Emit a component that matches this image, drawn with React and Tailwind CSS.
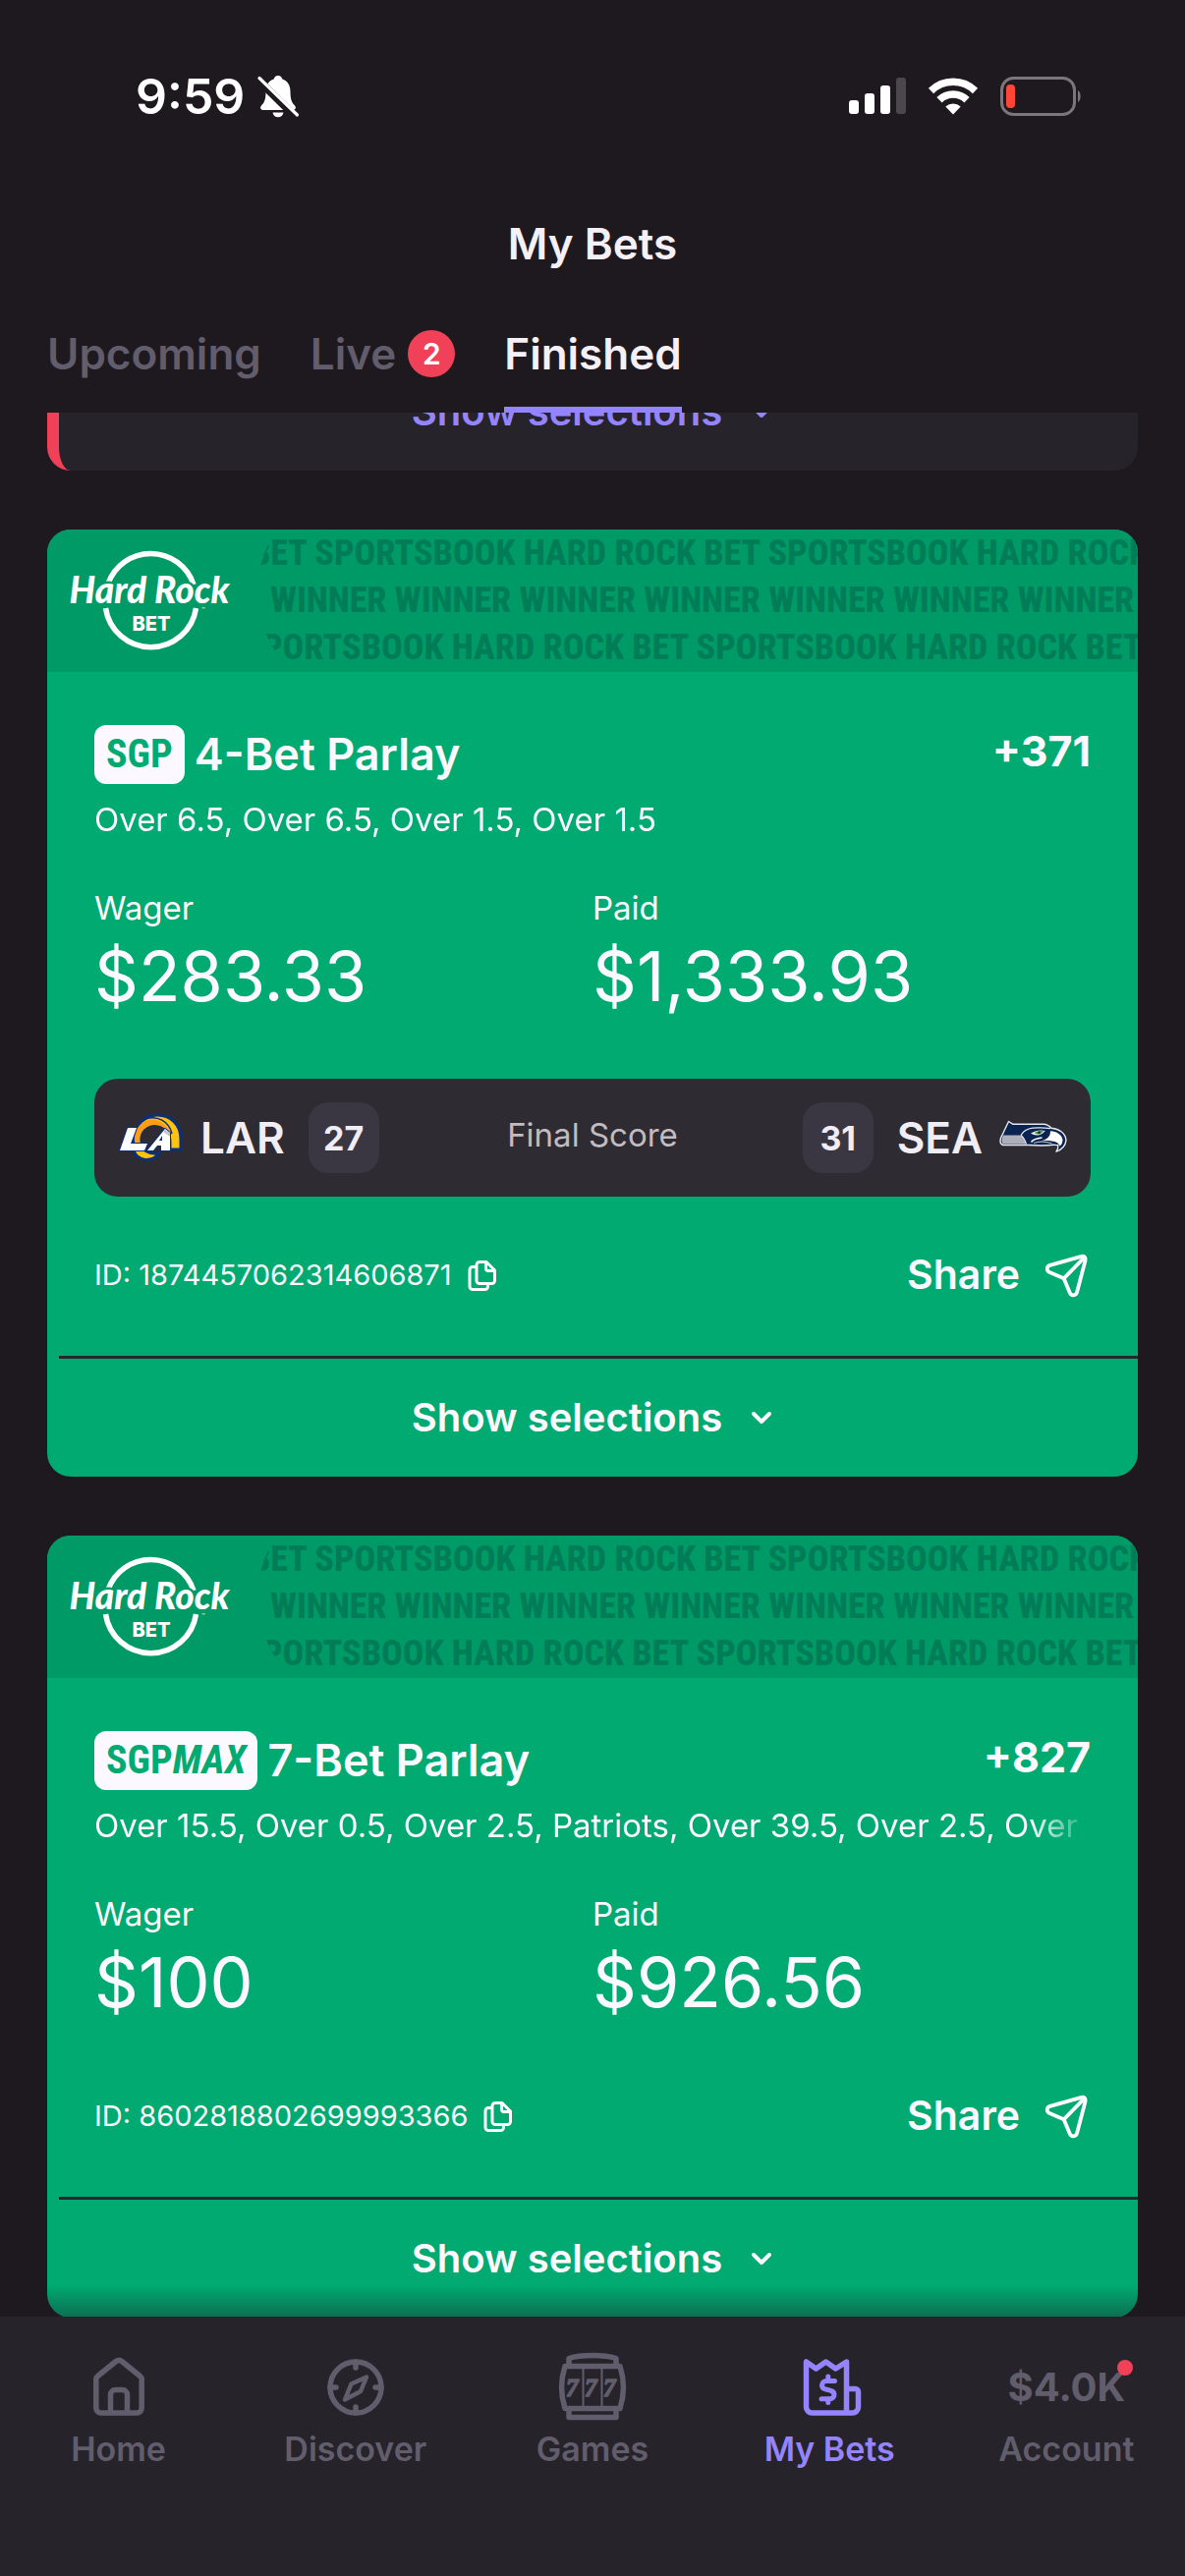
const BANNER_ROWS = [
  { shift: '-ml-[8px]', text: 'BET SPORTSBOOK HARD ROCK BET SPORTSBOOK HARD ROCK BET SPORTSBOOK HARD ROCK BET SPORTSBOOK' },
  { shift: 'ml-[12px]', text: 'WINNER WINNER WINNER WINNER WINNER WINNER WINNER WINNER WINNER WINNER WINNER' },
  { shift: 'ml-[4px]', text: 'PORTSBOOK HARD ROCK BET SPORTSBOOK HARD ROCK BET SPORTSBOOK HARD ROCK BET SPORTSBOOK' },
];

const BETS = [
  {
    tag: 'SGP',
    title: '4-Bet Parlay',
    odds: '+371',
    legs: 'Over 6.5, Over 6.5, Over 1.5, Over 1.5',
    wager: '$283.33',
    paid: '$1,333.93',
    score: true,
    id: '1874457062314606871',
  },
  {
    tag: 'SGP',
    tagSuffix: 'MAX',
    title: '7-Bet Parlay',
    odds: '+827',
    legs: 'Over 15.5, Over 0.5, Over 2.5, Patriots, Over 39.5, Over 2.5, Over 1.5',
    wager: '$100',
    paid: '$926.56',
    score: false,
    id: '8602818802699993366',
  },
];

function BellOff() {
  return (
    <svg className="h-11 w-11" viewBox="0 0 44 44" aria-label="Silent mode">
      <path
        fill="#fff"
        d="M22 1c2.500 0 4 1.500 4.300 3.600C31.500 6.300 34.500 11 34.500 17c0 8.500 1.500 11.500 4.500 14.500 1.800 1.900.8 4.500-2 4.500H7c-2.800 0-3.800-2.600-2-4.500 3-3 4.500-6 4.500-14.500 0-6 3-10.700 8.200-12.400C18 2.500 19.500 1 22 1zM16.500 38.500h11c-.5 3-2.600 4.800-5.500 4.800s-5-1.800-5.500-4.800z"
      />
      <path d="M2 5.500 40 43" stroke="#1e191f" strokeWidth="8" />
      <path d="M3 3.500 41.500 41" stroke="#fff" strokeWidth="3.200" strokeLinecap="round" />
    </svg>
  );
}

function Signal() {
  return (
    <svg className="h-[38px] w-[58px]" viewBox="0 0 58 38" fill="#fff" aria-label="Signal">
      <rect x="0" y="23" width="10" height="14" rx="3" />
      <rect x="16" y="16" width="10" height="21" rx="3" />
      <rect x="32" y="8" width="10" height="29" rx="3" />
      <rect x="48" y="0" width="10" height="37" rx="3" fill="#4b474c" />
    </svg>
  );
}

function Wifi() {
  return (
    <svg className="h-[38px] w-[52px]" viewBox="0 0 52 38" fill="none" stroke="#fff" strokeWidth="7.500" aria-label="Wi-Fi">
      <path d="M3.500 13.500a32 32 0 0 1 45 0" />
      <path d="M12 22.800a20 20 0 0 1 28 0" />
      <path d="M26 37.500 18.300 29.500a11.500 11.500 0 0 1 15.400 0z" fill="#fff" stroke="none" />
    </svg>
  );
}

function Battery() {
  return (
    <svg className="h-10 w-[84px]" viewBox="0 0 84 40" aria-label="Battery low">
      <rect x="1.500" y="1.500" width="74" height="37" rx="12" fill="none" stroke="#7a767b" strokeWidth="3" />
      <rect x="6" y="8" width="9" height="24" rx="4" fill="#ff4438" />
      <path d="M79 14c3.500 1.500 3.500 10.500 0 12z" fill="#7a767b" />
    </svg>
  );
}

function HardRockLogo() {
  return (
    <svg className="h-[104px] w-[172px] shrink-0" viewBox="0 0 172 104" role="img" aria-label="Hard Rock Bet">
      <g fill="none" stroke="#fff" strokeWidth="5.500">
        <path d="M42 34A46 46 0 0 1 129 35" />
        <path d="M39.500 59A46.500 46.500 0 0 0 131.500 59" />
      </g>
      <text
        x="84"
        y="54"
        textAnchor="middle"
        fontSize="37"
        fill="#fff"
        stroke="#009a67"
        strokeWidth="5"
        style={{ fontFamily: 'Lato, sans-serif', fontWeight: 900, fontStyle: 'italic', paintOrder: 'stroke' }}
      >
        Hard Rock
      </text>
      <text x="86" y="82" textAnchor="middle" fontSize="20" fill="#fff" style={{ fontFamily: 'Inter, sans-serif', fontWeight: 800 }}>
        BET
      </text>
      <text x="137" y="63" fontSize="6" fill="#fff" style={{ fontFamily: 'Inter, sans-serif' }}>
        ™
      </text>
    </svg>
  );
}

function RamsLogo() {
  return (
    <svg className="h-[52px] w-[68px]" viewBox="0 0 68 52" role="img" aria-label="Rams">
      <g stroke="#0b2f7a" strokeWidth="3" strokeLinejoin="round">
        <path d="M16 39C14 20 22 4 39 3c15-.5 25 10 25 24v11H53V31C53 20 47 12 36 12c-12 1-16 11-12 22 3 7 10 9 18 8-7 9-22 9-26-3z" fill="#ffc20e" />
      </g>
      <path d="M17 30C16 16 26 6 38 8c9 2 14 8 15 15-4-8-13-12-21-9-8 3-12 12-8 21z" fill="#ff9d14" />
      <path d="M28 7c12-4 24 2 27 15" fill="none" stroke="#0b2f7a" strokeWidth="1.500" />
      <g fill="#fff" stroke="#0b2f7a" strokeWidth="2" strokeLinejoin="round" style={{ paintOrder: 'stroke' }}>
        <path d="M10 16h9l-6 16h17l-3 7H2z" />
        <path d="M30 39 48 17l5 4v18h-9v-5h-4l-4 5zM42 29h3v-5z" fillRule="evenodd" />
      </g>
      <path d="M48 17l5 4v4l-7-5z" fill="#c4c6c9" />
    </svg>
  );
}

function SeahawksLogo() {
  return (
    <svg className="h-9 w-[70px]" viewBox="0 0 70 36" role="img" aria-label="Seahawks">
      <path
        d="M10.500 1.500 15 4.300h31c4 .2 6 1.700 8 3.900 8 .8 14.500 5 15 12.500-.6 5.500-4.500 9.500-10 11.500 1.500-2.500 2.200-4.500 1.800-6.700-2 .3-3 .2-4.500-.3-9 1.300-17 .8-25 .3H5c-3.500-.8-4-5-1.500-9.300z"
        fill="#0a2350"
        stroke="#e6e8ee"
        strokeWidth="1.400"
        strokeLinejoin="round"
      />
      <path d="M5 15.500h18c2 2 3.500 5.500 5 9H5.500C2.800 23.500 3 19.500 5 15.500z" fill="#adb0ba" />
      <path d="M23 15.500c2-3.500 6-6.500 12-7.300 6-.6 12-.4 18 .4" fill="none" stroke="#e6e8ee" strokeWidth="1.300" />
      <path d="M23 15.500c3 2 4 5 5.500 9" fill="none" stroke="#e6e8ee" strokeWidth="1.300" />
      <path d="M33 13.500c5-3 10-3.600 15-2.500-2 1.500-3.500 4-8 4.500-3 .2-5-.8-7-2z" fill="#e6e8ee" />
      <path d="M37 12.800c3-1.500 6-2 9-1.600-1.800 1.500-3 3.300-5.500 3.300-1.500 0-2.700-.7-3.500-1.700z" fill="#4f9a2a" />
      <circle cx="41.500" cy="12.800" r="1.300" fill="#0a2350" />
      <path d="M53 11.300c6.500.3 12 3.700 12.500 9.200-.2 2.500-1 4.500-2.700 6-1.300-3-4-4.500-8.300-5-4-.6-7.500-.5-11-.1 5-1.200 9.500-3.600 9.500-10.100z" fill="#fff" />
      <path d="M33.500 22.500c2.500-3.500 7-4 11-4.500" fill="none" stroke="#fff" strokeWidth="1.500" />
      <path d="M36 23.500c6-1.800 13-1.500 18.500.3" fill="none" stroke="#adb0ba" strokeWidth="1.200" />
    </svg>
  );
}

function CopyIcon() {
  return (
    <svg className="h-8 w-[30px]" viewBox="0 0 30 32" fill="none" stroke="#fff" strokeWidth="3" strokeLinejoin="round" strokeLinecap="round">
      <path d="M12 2.500h7L27.500 11v10.500a3 3 0 0 1-3 3H12a3 3 0 0 1-3-3v-16a3 3 0 0 1 3-3z" />
      <path d="M18.500 3v6a2.500 2.500 0 0 0 2.500 2.500h6" />
      <path d="M8.500 7.500H5a3 3 0 0 0-3 3v17a3 3 0 0 0 3 3h12.500a3 3 0 0 0 3-3v-2.500" />
    </svg>
  );
}

function SendIcon() {
  return (
    <svg className="h-12 w-12" viewBox="0 0 48 48" fill="none" stroke="#fff" strokeWidth="3.800" strokeLinejoin="round" strokeLinecap="round">
      <path d="M38.500 4.800 6.500 13.800c-3.600 1.200-3.600 5.800-.3 7.300l14.500 6.100 6 14.600c1.500 3.400 6.200 3.300 7.300-.3L42.600 8.800c.8-2.700-1.500-4.800-4.100-4z" />
      <path d="M20.800 27.200 41 6.500" />
    </svg>
  );
}

function Chevron() {
  return (
    <svg className="h-6 w-6" viewBox="0 0 24 24" fill="none" stroke="currentColor" strokeWidth="4" strokeLinejoin="round" strokeLinecap="round">
      <path d="m4 8 8 8 8-8" />
    </svg>
  );
}

function HomeIcon() {
  return (
    <svg className="h-[72px] w-[72px]" viewBox="0 0 72 72" fill="none" stroke="currentColor" strokeWidth="5.500" strokeLinejoin="round">
      <path d="M33 9.500 14.500 24.500a4 4 0 0 0-1.700 3.300V57a5 5 0 0 0 5 5h36.400a5 5 0 0 0 5-5V27.800a4 4 0 0 0-1.700-3.300L39 9.500a5 5 0 0 0-6 0z" />
      <path d="M27.500 61V43.500a5 5 0 0 1 5-5h7a5 5 0 0 1 5 5V61" />
    </svg>
  );
}

function CompassIcon() {
  return (
    <svg className="h-[72px] w-[72px]" viewBox="0 0 72 72" fill="none" stroke="currentColor" strokeWidth="5.500" strokeLinejoin="round" strokeLinecap="round">
      <circle cx="36" cy="36" r="26" />
      <path d="M47 25.500 41 40l-16 8.500 6.500-16z" strokeWidth="4.500" />
      <path d="M36 10v6M36 56v6M10 36h6M56 36h6" />
    </svg>
  );
}

function SlotsIcon() {
  return (
    <svg className="h-[72px] w-[72px]" viewBox="0 0 72 72" fill="none" stroke="currentColor" strokeWidth="5.500" strokeLinejoin="round">
      <path d="M8 14.500h56c4.500 14 4.500 29 0 43H8c-4.500-14-4.500-29 0-43z" />
      <path d="M12 13V6.500C24 2.500 48 2.500 60 6.500V13M12 58v8.500h48V58" />
      <path d="M26.500 16v40M45.500 16v40" strokeWidth="2" />
      {[9, 28, 47].map((x) => (
        <text
          key={x}
          x={x}
          y="45"
          fontSize="25"
          fill="currentColor"
          stroke="currentColor"
          strokeWidth="1.500"
          style={{ fontFamily: '"Liberation Serif", serif', fontWeight: 700, fontStyle: 'italic' }}
        >
          7
        </text>
      ))}
    </svg>
  );
}

function ReceiptIcon() {
  return (
    <svg className="h-[72px] w-[72px]" viewBox="0 0 72 72" fill="none" stroke="currentColor" strokeWidth="5.500" strokeLinejoin="round" strokeLinecap="round">
      <path d="M53.500 62V10l-11 7-10-7-10 7-10-7v46a6 6 0 0 0 6 6h41a6 6 0 0 0 6-6V40.500a3 3 0 0 0-3-3h-9" />
      <path d="M41.500 29.500h-8.500a4.500 4.500 0 0 0-4.500 4.500c0 2 1.500 3.500 4 4l4.500 1.200c2.500.6 4 2 4 4a4.500 4.500 0 0 1-4.500 4.500H28M34.800 25v4M34.800 47.500v4" strokeWidth="5" />
    </svg>
  );
}

function WinnerBanner() {
  return (
    <div className="flex h-[145px] items-start bg-[#009a67]">
      <div className="flex h-full w-[215px] shrink-0 items-center pl-5">
        <HardRockLogo />
      </div>
      <div
        aria-hidden="true"
        className="h-full min-w-0 flex-1 overflow-hidden rounded-tl-[30px_60px] rounded-bl-[50px_85px] font-['Roboto_Condensed','Liberation_Sans_Narrow','Liberation_Sans',sans-serif] text-[36px] leading-[48px] font-extrabold whitespace-nowrap text-[#007d56]"
      >
        {BANNER_ROWS.map((row) => (
          <p key={row.text} className={row.shift}>
            {row.text}
          </p>
        ))}
      </div>
    </div>
  );
}

function ScoreBar() {
  return (
    <div className="mt-12 grid h-[120px] grid-cols-[1fr_auto_1fr] items-center rounded-3xl bg-[#2f2b33] px-6 text-[#f1edf5]">
      <div className="flex items-center">
        <RamsLogo />
        <span className="ml-4 text-[44px] font-semibold">LAR</span>
        <span className="ml-6 grid h-[72px] w-[72px] place-items-center rounded-[20px] bg-[#3a3743] text-[34px] font-bold">27</span>
      </div>
      <span className="pb-1 text-[33px] text-[#c0bcc2]">Final Score</span>
      <div className="flex items-center justify-end">
        <span className="mr-6 grid h-[72px] w-[72px] place-items-center rounded-[20px] bg-[#3a3743] text-[34px] font-bold">31</span>
        <span className="mr-4 text-[44px] font-semibold">SEA</span>
        <SeahawksLogo />
      </div>
    </div>
  );
}

function ShowSelections() {
  return (
    <button type="button" className="flex h-[120px] w-full items-center justify-center gap-7 pr-3 text-[40px] font-semibold">
      Show selections
      <Chevron />
    </button>
  );
}

function BetCard({ bet }) {
  return (
    <article className="overflow-hidden rounded-3xl bg-[#00aa71] text-[#fbf9ff]">
      <WinnerBanner />
      <div className="px-12 pt-[54px] pb-[52px]">
        <div className="flex h-[60px] items-center">
          <span className="flex h-[60px] items-center rounded-xl bg-[#fbf9ff] px-3 font-['Roboto_Condensed','Liberation_Sans_Narrow','Liberation_Sans',sans-serif] text-[40px] font-bold text-[#00aa71]">
            {bet.tag}
            {bet.tagSuffix && <em>{bet.tagSuffix}</em>}
          </span>
          <h2 className="ml-[10px] text-[45px] font-semibold">{bet.title}</h2>
          <span className="ml-auto self-start text-[43px] leading-[52px] font-bold">{bet.odds}</span>
        </div>
        <p className="mt-3 overflow-hidden text-[33px] leading-[48px] whitespace-nowrap [mask-image:linear-gradient(to_right,#000_94%,transparent)]">
          {bet.legs}
        </p>
        <dl className="mt-[42px] grid grid-cols-2 pb-[10px]">
          <div>
            <dt className="text-[33px] leading-[48px]">Wager</dt>
            <dd className="text-[70px] leading-[92px]">{bet.wager}</dd>
          </div>
          <div>
            <dt className="text-[33px] leading-[48px]">Paid</dt>
            <dd className="text-[70px] leading-[92px]">{bet.paid}</dd>
          </div>
        </dl>
        {bet.score && <ScoreBar />}
        <div className="mt-[50px] flex h-[60px] items-center">
          <span className="text-[29px]">ID: {bet.id}</span>
          <button type="button" aria-label="Copy ID" className="ml-4">
            <CopyIcon />
          </button>
          <button type="button" className="ml-auto flex items-center gap-6 text-[41px] font-semibold">
            Share
            <SendIcon />
          </button>
        </div>
      </div>
      <div className="ml-3 border-t-[3px] border-[#26272c]">
        <ShowSelections />
      </div>
    </article>
  );
}

function NavItem({ label, active, children }) {
  return (
    <a
      href="#"
      aria-current={active ? 'page' : undefined}
      className={`flex flex-1 flex-col items-center gap-[3px] text-[34px] leading-[48px] font-semibold ${active ? 'text-[#9584ff]' : 'text-[#625d6c]'}`}
    >
      <span className="flex h-[72px] items-center">{children}</span>
      <span>{label}</span>
    </a>
  );
}

export default function App() {
  return (
    <div className="flex h-screen flex-col overflow-hidden bg-[#1e191f] font-[Inter,sans-serif] text-[#f5f0f7]">
      <header className="shrink-0">
        <div className="flex h-[196px] items-center justify-between pr-[104px] pl-[138px] text-white">
          <div className="flex items-center gap-3">
            <time className="text-[50px] font-semibold">9:59</time>
            <BellOff />
          </div>
          <div className="flex items-center gap-[22px]">
            <Signal />
            <Wifi />
            <Battery />
          </div>
        </div>
        <h1 className="h-[104px] text-center text-[44px] leading-[104px] font-semibold">My Bets</h1>
        <nav className="flex h-[120px] gap-[50px] px-12 text-[44px] font-semibold text-[#625d6c]">
          <button type="button">Upcoming</button>
          <button type="button" className="flex items-center gap-3">
            Live
            <span className="grid h-12 w-12 place-items-center rounded-full bg-[#f04158] text-[30px] text-white">2</span>
          </button>
          <button type="button" aria-current="page" className="border-b-[6px] border-[#9584ff] pt-[6px] text-[#f5f0f7]">
            Finished
          </button>
        </nav>
      </header>

      <main className="relative min-h-0 flex-1 overflow-hidden px-12">
        <div className="-mt-[61px] flex flex-col gap-[60px]">
          <div className="rounded-b-3xl border-l-[12px] border-[#f04158] bg-[#26232a] text-[#9584ff]">
            <ShowSelections />
          </div>
          {BETS.map((bet) => (
            <BetCard key={bet.id} bet={bet} />
          ))}
        </div>
        <div className="pointer-events-none absolute inset-x-0 bottom-0 h-8 bg-linear-to-t from-[#1e191f]/40 to-transparent" />
      </main>

      <nav className="flex h-[264px] shrink-0 bg-[#26232a] pt-9">
        <NavItem label="Home">
          <HomeIcon />
        </NavItem>
        <NavItem label="Discover">
          <CompassIcon />
        </NavItem>
        <NavItem label="Games">
          <SlotsIcon />
        </NavItem>
        <NavItem label="My Bets" active>
          <ReceiptIcon />
        </NavItem>
        <NavItem label="Account">
          <span className="relative text-[40px] font-bold">
            $4.0K
            <span className="absolute -top-1 -right-2 h-4 w-4 rounded-full bg-[#f04158]" />
          </span>
        </NavItem>
      </nav>
    </div>
  );
}
